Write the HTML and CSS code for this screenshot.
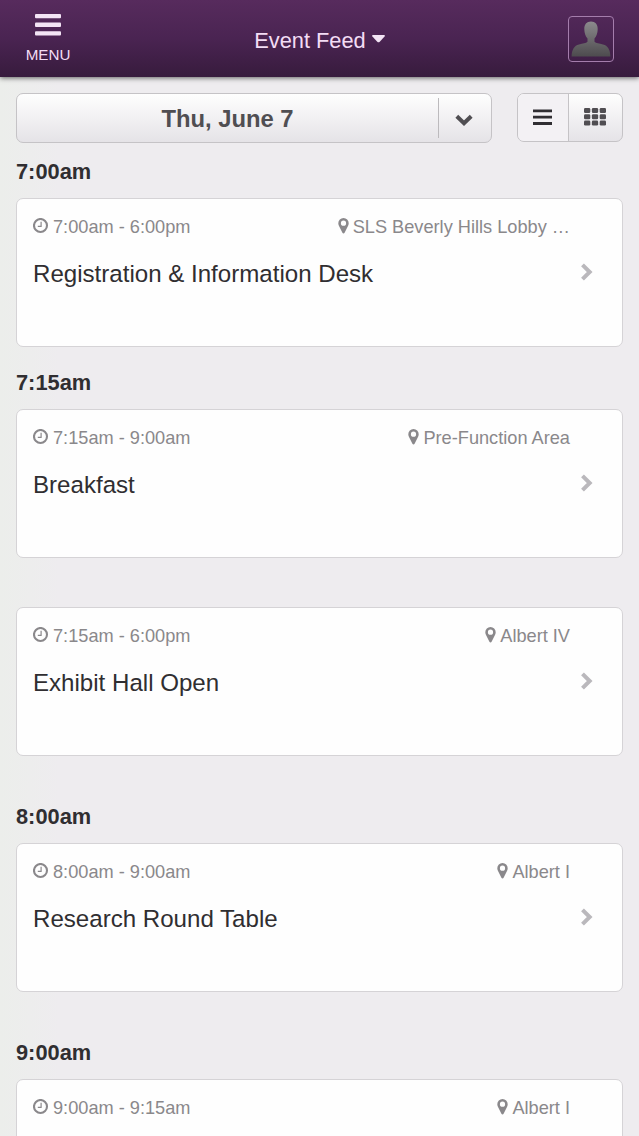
FILE: index.html
```
<!DOCTYPE html>
<html lang="en">
  <head>
    <meta charset="UTF-8" />
    <meta name="viewport" content="width=device-width, initial-scale=1.0" />
    <title>Event Feed</title>
    <link rel="stylesheet" href="styles.css">
  </head>
  <body>
    <svg class="sprite" width="0" height="0">
      <symbol id="clock" viewBox="0 0 16 16">
        <circle cx="7.5" cy="7.5" r="6.5" fill="none" stroke="currentColor" stroke-width="2.1" />
        <path d="M8.1 3.800v4.500H4.800" fill="none" stroke="currentColor" stroke-width="1.200" />
      </symbol>
      <symbol id="pin" viewBox="0 0 11 16">
        <path fill="currentColor" fill-rule="evenodd" d="M5.500 0A5.200 5.200 0 0 0 .3 5.200c0 1 .2 1.700.6 2.500l3.500 7.100c.4.900 1.800.900 2.200 0l3.500-7.100c.4-.8.6-1.500.6-2.500A5.200 5.200 0 0 0 5.500 0zM5.500 2.600a2.600 2.600 0 1 1 0 5.200 2.600 2.600 0 0 1 0-5.200z" />
      </symbol>
      <symbol id="chevron" viewBox="0 0 12 18">
        <path d="M1.500 1.800l7.200 7.200-7.200 7.200" fill="none" stroke="currentColor" stroke-width="4" />
      </symbol>
    </svg>

    <header class="navbar">
      <a class="menu">
        <svg width="26" height="22" viewBox="0 0 26 22" fill="#f3e4f5">
          <rect y="0" width="26" height="4.300" rx="1" />
          <rect y="8.600" width="26" height="4.300" rx="1" />
          <rect y="17.300" width="26" height="4.300" rx="1" />
        </svg>
        <span>MENU</span>
      </a>
      <h1 class="page-title">Event Feed<svg class="caret" width="13" height="8" viewBox="0 0 13 8"><path d="M1 0h11c.9 0 1.200.7.6 1.400L7.500 6.900c-.6.600-1.400.600-2 0L.4 1.400C-.2.700.1 0 1 0z" fill="#f3e4f5" /></svg></h1>
      <a class="avatar">
        <svg width="40" height="40" viewBox="0 0 40 40">
          <defs>
            <linearGradient id="person" x1="0" y1="0" x2="0" y2="1">
              <stop offset="0" stop-color="#8c8a8d" />
              <stop offset="1" stop-color="#4d4b4e" />
            </linearGradient>
          </defs>
          <path fill="url(#person)" d="M20 2.500c4.300 0 6.900 3 6.700 7.800-.1 4-1.200 7-3.200 9.200v3.200c1.500 1.500 4.500 1.700 8.500 2.700 4.700 1.200 7.200 4.800 7.400 12.100H.6c.2-7.300 2.700-10.900 7.400-12.100 4-1 7-1.200 8.500-2.700v-3.200c-2-2.200-3.100-5.200-3.200-9.200-.2-4.800 2.400-7.800 6.700-7.800z" />
        </svg>
      </a>
    </header>

    <div class="toolbar">
      <div class="date-select">
        <span class="date">Thu, June 7</span>
        <span class="toggle">
          <svg width="18" height="13" viewBox="0 0 18 13"><path d="M1.800 2.300L9 9.300l7.200-7" fill="none" stroke="#504e52" stroke-width="4" /></svg>
        </span>
      </div>
      <div class="view-switch">
        <span class="view active">
          <svg width="19" height="17" viewBox="0 0 19 17"><path d="M0 1.900h19M0 8.200h19M0 14.500h19" stroke="#302e32" stroke-width="2.800" /></svg>
        </span>
        <span class="view">
          <svg width="22" height="18" viewBox="0 0 22 18" fill="#504e52">
            <rect x="0" y="0" width="6.300" height="5" rx="1.300" />
            <rect x="7.850" y="0" width="6.300" height="5" rx="1.300" />
            <rect x="15.700" y="0" width="6.300" height="5" rx="1.300" />
            <rect x="0" y="6.300" width="6.300" height="5" rx="1.300" />
            <rect x="7.850" y="6.300" width="6.300" height="5" rx="1.300" />
            <rect x="15.700" y="6.300" width="6.300" height="5" rx="1.300" />
            <rect x="0" y="12.600" width="6.300" height="5" rx="1.300" />
            <rect x="7.850" y="12.600" width="6.300" height="5" rx="1.300" />
            <rect x="15.700" y="12.600" width="6.300" height="5" rx="1.300" />
          </svg>
        </span>
      </div>
    </div>

    <main class="feed">
      <section class="group compact">
        <h2>7:00am</h2>
        <div class="card">
          <div class="meta">
            <span class="time"><svg class="clock"><use href="#clock" /></svg>7:00am - 6:00pm</span>
            <span class="place"><svg class="pin"><use href="#pin" /></svg>SLS Beverly Hills Lobby …</span>
          </div>
          <div class="name">Registration &amp; Information Desk<svg class="chevron"><use href="#chevron" /></svg></div>
        </div>
      </section>

      <section class="group">
        <h2>7:15am</h2>
        <div class="card">
          <div class="meta">
            <span class="time"><svg class="clock"><use href="#clock" /></svg>7:15am - 9:00am</span>
            <span class="place"><svg class="pin"><use href="#pin" /></svg>Pre-Function Area</span>
          </div>
          <div class="name">Breakfast<svg class="chevron"><use href="#chevron" /></svg></div>
        </div>
        <div class="card">
          <div class="meta">
            <span class="time"><svg class="clock"><use href="#clock" /></svg>7:15am - 6:00pm</span>
            <span class="place"><svg class="pin"><use href="#pin" /></svg>Albert IV</span>
          </div>
          <div class="name">Exhibit Hall Open<svg class="chevron"><use href="#chevron" /></svg></div>
        </div>
      </section>

      <section class="group">
        <h2>8:00am</h2>
        <div class="card">
          <div class="meta">
            <span class="time"><svg class="clock"><use href="#clock" /></svg>8:00am - 9:00am</span>
            <span class="place"><svg class="pin"><use href="#pin" /></svg>Albert I</span>
          </div>
          <div class="name">Research Round Table<svg class="chevron"><use href="#chevron" /></svg></div>
        </div>
      </section>

      <section class="group">
        <h2>9:00am</h2>
        <div class="card">
          <div class="meta">
            <span class="time"><svg class="clock"><use href="#clock" /></svg>9:00am - 9:15am</span>
            <span class="place"><svg class="pin"><use href="#pin" /></svg>Albert I</span>
          </div>
        </div>
      </section>
    </main>
  </body>
</html>
```
FILE: styles.css
```
* {
  box-sizing: border-box;
}
body {
  display: flex;
  flex-direction: column;
  margin: 0;
  height: 100vh;
  background: linear-gradient(to right, #eceeeb 0, #eeecef 60px);
  font-family: "Liberation Sans", Arial, sans-serif;
  color: #302e31;
}
svg {
  display: block;
  flex: none;
}
.sprite {
  display: none;
}

/* top bar */
.navbar {
  display: grid;
  flex: none;
  grid-template-columns: 96px 1fr 96px;
  height: 77px;
  background: linear-gradient(#572b5d, #4a2452 50%, #371b3d);
  box-shadow: 0 1px 5px rgba(0, 0, 0, 0.6);
  color: #f3dcf5;
}
.menu {
  display: flex;
  flex-direction: column;
  align-items: center;
  gap: 10.500px;
  padding-top: 13.500px;
  font-size: 15.200px;
  line-height: 18px;
}
.page-title {
  display: flex;
  align-items: center;
  justify-content: center;
  margin: 0;
  padding-top: 4px;
  font-size: 21.800px;
  font-weight: normal;
}
.caret {
  margin: -3px 0 0 6px;
}
.avatar {
  justify-self: end;
  width: 46px;
  height: 46px;
  margin: 16px 25px 0 0;
  padding: 2px;
  border: 1px solid #a47dac;
  border-radius: 4px;
}

/* date picker and list/grid switch */
.toolbar {
  display: flex;
  flex: none;
  justify-content: space-between;
  align-items: flex-start;
  padding: 16px 16px 0;
}
.date-select,
.view-switch {
  display: flex;
  border: 1px solid #c5c3c6;
  border-radius: 7px;
  background: linear-gradient(#fefefe, #e5e3e7);
}
.date-select {
  align-items: center;
  width: 476px;
  height: 50px;
}
.date {
  flex: 1;
  padding-top: 2px;
  text-align: center;
  font-size: 23.800px;
  font-weight: bold;
  color: #504e52;
}
.toggle {
  display: flex;
  align-items: center;
  justify-content: center;
  width: 53px;
  height: 40px;
  padding: 5px 2px 0 0;
  border-left: 1px solid #bcbabd;
}
.view-switch {
  width: 106px;
  height: 49px;
  overflow: hidden;
}
.view {
  display: flex;
  flex: 1;
  align-items: center;
  justify-content: center;
  padding: 0 1px 1px 0;
}
.view.active {
  flex: none;
  width: 51px;
  border-right: 1px solid #c5c3c6;
  background: #f3f1f4;
}

/* event list */
.feed {
  flex: 1;
  min-height: 0;
  padding: 16px 16px 0;
  overflow: hidden;
}
.group {
  padding-bottom: 48px;
}
.group.compact {
  padding-bottom: 23px;
}
.group h2 {
  margin: 0;
  font-size: 21.800px;
  line-height: 26px;
}
.card {
  height: 149px;
  margin-top: 13px;
  padding: 17px 0 0 16px;
  border: 1px solid #d5d3d6;
  border-radius: 7px;
  background: #fefefe;
}
.card + .card {
  margin-top: 49px;
}
.meta {
  display: flex;
  justify-content: space-between;
  padding-right: 52px;
  font-size: 18.200px;
  line-height: 22px;
  color: #8a888b;
}
.time,
.place {
  display: flex;
  white-space: nowrap;
}
.clock {
  width: 16px;
  height: 16px;
  margin: 2px 4px 0 0;
}
.pin {
  width: 11px;
  height: 16px;
  margin: 2px 4px 0 0;
}
.name {
  display: flex;
  justify-content: space-between;
  margin-top: 22px;
  padding-right: 29px;
  font-size: 24.100px;
  line-height: 28px;
}
.chevron {
  width: 12px;
  height: 18px;
  margin-top: 3px;
  color: #bab8bc;
}
```
